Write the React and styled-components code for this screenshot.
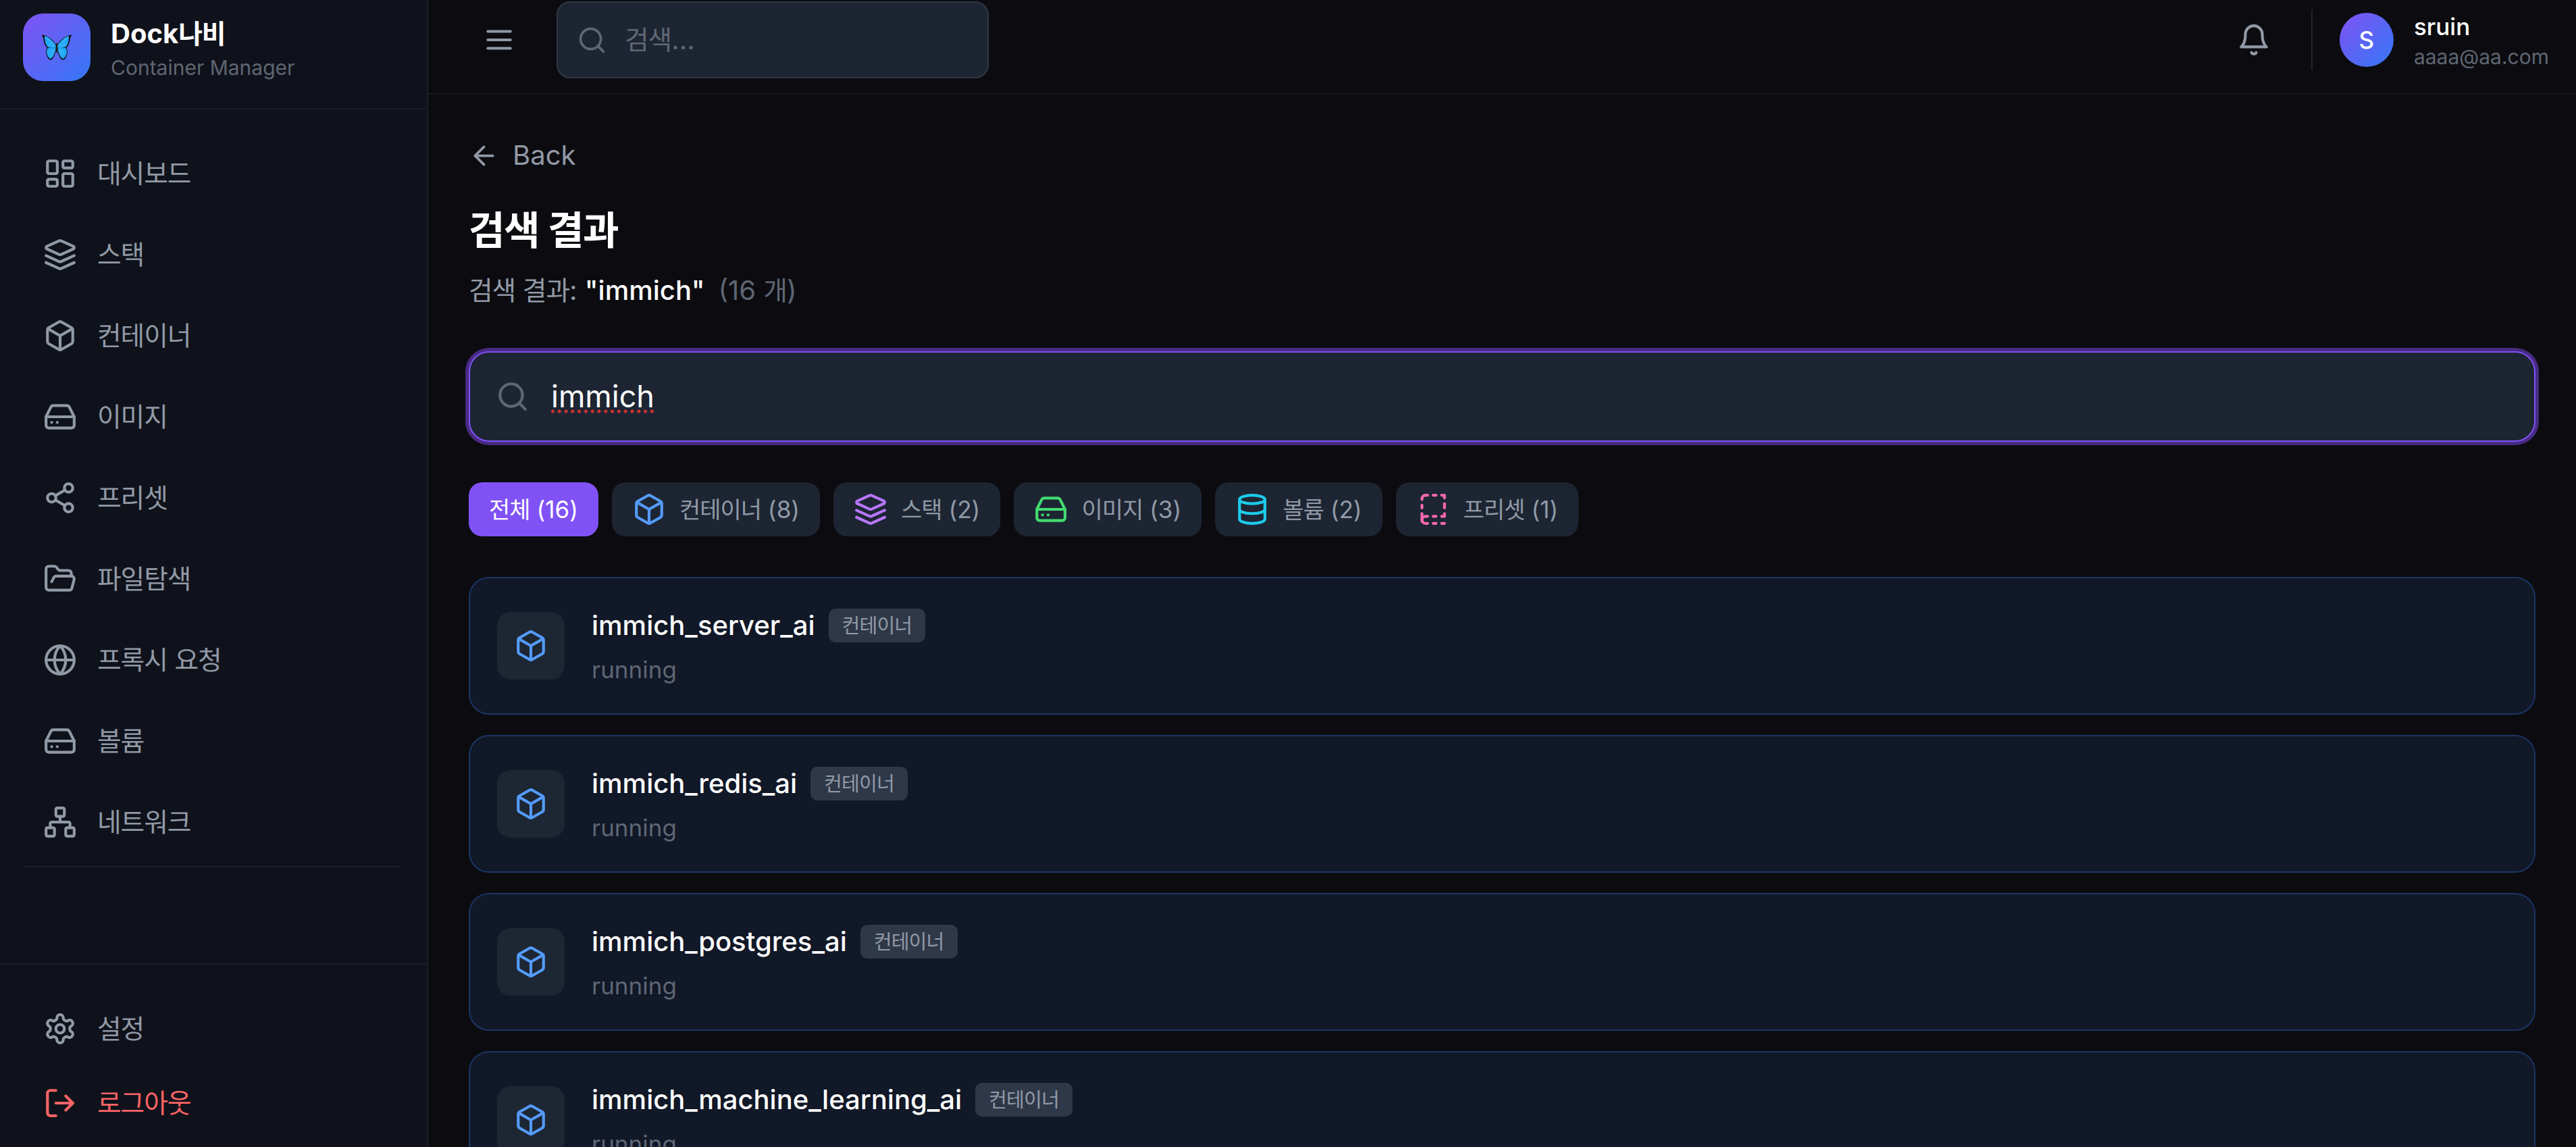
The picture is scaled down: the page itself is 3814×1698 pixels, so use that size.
import React from 'react';
import styled, { createGlobalStyle } from 'styled-components';

const ICONS = {
    dashboard: (
        <>
            <rect width="7" height="9" x="3" y="3" rx="1" />
            <rect width="7" height="5" x="14" y="3" rx="1" />
            <rect width="7" height="9" x="14" y="12" rx="1" />
            <rect width="7" height="5" x="3" y="16" rx="1" />
        </>
    ),
    layers: (
        <>
            <path d="m12.83 2.18a2 2 0 0 0-1.66 0L2.6 6.08a1 1 0 0 0 0 1.83l8.58 3.91a2 2 0 0 0 1.66 0l8.58-3.9a1 1 0 0 0 0-1.83Z" />
            <path d="m22 17.65-9.17 4.16a2 2 0 0 1-1.66 0L2 17.65" />
            <path d="m22 12.65-9.17 4.16a2 2 0 0 1-1.66 0L2 12.65" />
        </>
    ),
    box: (
        <>
            <path d="M21 8a2 2 0 0 0-1-1.73l-7-4a2 2 0 0 0-2 0l-7 4A2 2 0 0 0 3 8v8a2 2 0 0 0 1 1.73l7 4a2 2 0 0 0 2 0l7-4A2 2 0 0 0 21 16Z" />
            <path d="m3.3 7 8.7 5 8.7-5" />
            <path d="M12 22V12" />
        </>
    ),
    drive: (
        <>
            <path d="M22 12H2" />
            <path d="M5.45 5.11 2 12v6a2 2 0 0 0 2 2h16a2 2 0 0 0 2-2v-6l-3.45-6.89A2 2 0 0 0 16.76 4H7.24a2 2 0 0 0-1.79 1.11z" />
            <path d="M6 16h.01" />
            <path d="M10 16h.01" />
        </>
    ),
    share: (
        <>
            <circle cx="18" cy="5" r="3" />
            <circle cx="6" cy="12" r="3" />
            <circle cx="18" cy="19" r="3" />
            <path d="M8.59 13.51 15.42 17.49" />
            <path d="M15.41 6.51 8.59 10.49" />
        </>
    ),
    folder: (
        <path d="m6 14 1.5-2.9A2 2 0 0 1 9.24 10H20a2 2 0 0 1 1.94 2.5l-1.54 6a2 2 0 0 1-1.95 1.5H4a2 2 0 0 1-2-2V5a2 2 0 0 1 2-2h3.9a2 2 0 0 1 1.69.9l.81 1.2a2 2 0 0 0 1.67.9H18a2 2 0 0 1 2 2v2" />
    ),
    globe: (
        <>
            <circle cx="12" cy="12" r="10" />
            <path d="M12 2a14.5 14.5 0 0 0 0 20 14.5 14.5 0 0 0 0-20" />
            <path d="M2 12h20" />
        </>
    ),
    network: (
        <>
            <rect x="16" y="16" width="6" height="6" rx="1" />
            <rect x="2" y="16" width="6" height="6" rx="1" />
            <rect x="9" y="2" width="6" height="6" rx="1" />
            <path d="M5 16v-3a1 1 0 0 1 1-1h12a1 1 0 0 1 1 1v3" />
            <path d="M12 12V8" />
        </>
    ),
    settings: (
        <>
            <path d="M12.22 2h-.44a2 2 0 0 0-2 2v.18a2 2 0 0 1-1 1.73l-.43.25a2 2 0 0 1-2 0l-.15-.08a2 2 0 0 0-2.73.73l-.22.38a2 2 0 0 0 .73 2.73l.15.1a2 2 0 0 1 1 1.72v.51a2 2 0 0 1-1 1.74l-.15.09a2 2 0 0 0-.73 2.73l.22.38a2 2 0 0 0 2.73.73l.15-.08a2 2 0 0 1 2 0l.43.25a2 2 0 0 1 1 1.73V20a2 2 0 0 0 2 2h.44a2 2 0 0 0 2-2v-.18a2 2 0 0 1 1-1.73l.43-.25a2 2 0 0 1 2 0l.15.08a2 2 0 0 0 2.73-.73l.22-.39a2 2 0 0 0-.73-2.73l-.15-.08a2 2 0 0 1-1-1.74v-.5a2 2 0 0 1 1-1.74l.15-.09a2 2 0 0 0 .73-2.73l-.22-.38a2 2 0 0 0-2.73-.73l-.15.08a2 2 0 0 1-2 0l-.43-.25a2 2 0 0 1-1-1.73V4a2 2 0 0 0-2-2z" />
            <circle cx="12" cy="12" r="3" />
        </>
    ),
    logout: (
        <>
            <path d="M9 21H5a2 2 0 0 1-2-2V5a2 2 0 0 1 2-2h4" />
            <path d="m16 17 5-5-5-5" />
            <path d="M21 12H9" />
        </>
    ),
    menu: (
        <>
            <path d="M4 6h16" />
            <path d="M4 12h16" />
            <path d="M4 18h16" />
        </>
    ),
    search: (
        <>
            <circle cx="11" cy="11" r="8" />
            <path d="m21 21-4.3-4.3" />
        </>
    ),
    bell: (
        <>
            <path d="M6 8a6 6 0 0 1 12 0c0 7 3 9 3 9H3s3-2 3-9" />
            <path d="M10.3 21a1.94 1.94 0 0 0 3.4 0" />
        </>
    ),
    back: (
        <>
            <path d="m12 19-7-7 7-7" />
            <path d="M19 12H5" />
        </>
    ),
    database: (
        <>
            <ellipse cx="12" cy="5" rx="9" ry="3" />
            <path d="M3 5V19A9 3 0 0 0 21 19V5" />
            <path d="M3 12A9 3 0 0 0 21 12" />
        </>
    ),
    preset: (
        <>
            <path d="M20 22h-2" />
            <path d="M20 15v2h-2" />
            <path d="M4 19.5V15" />
            <path d="M20 8v3" />
            <path d="M18 2h2v2" />
            <path d="M4 11V9" />
            <path d="M12 2h2" />
            <path d="M12 22h2" />
            <path d="M12 17h2" />
            <path d="M8 22H6.5a2.5 2.5 0 0 1 0-5H8" />
            <path d="M4 5v-.5A2.5 2.5 0 0 1 6.5 2H8" />
        </>
    ),
};

const NAV = [
    { icon: 'dashboard', label: '대시보드' },
    { icon: 'layers', label: '스택' },
    { icon: 'box', label: '컨테이너' },
    { icon: 'drive', label: '이미지' },
    { icon: 'share', label: '프리셋' },
    { icon: 'folder', label: '파일탐색' },
    { icon: 'globe', label: '프록시 요청' },
    { icon: 'drive', label: '볼륨' },
    { icon: 'network', label: '네트워크' },
];

const FILTERS = [
    { label: '전체', count: 16, active: true },
    { icon: 'box', color: '#549bfa', label: '컨테이너', count: 8 },
    { icon: 'layers', color: '#b677f9', label: '스택', count: 2 },
    { icon: 'drive', color: '#42dc70', label: '이미지', count: 3 },
    { icon: 'database', color: '#1ccbea', label: '볼륨', count: 2 },
    { icon: 'preset', color: '#f768ae', label: '프리셋', count: 1 },
];

const RESULTS = ['immich_server_ai', 'immich_redis_ai', 'immich_postgres_ai', 'immich_machine_learning_ai'];

const Icon = ({ name, size = 50, color }) => (
    <Svg $size={size} $color={color} viewBox="0 0 24 24">{ICONS[name]}</Svg>
);

const Butterfly = () => (
    <ButterflySvg viewBox="0 0 44 38">
        <g fill="none" stroke="#5a6bd8" strokeWidth="0.8">
            <path d="M21.5 13C21 9 19.5 6 17.5 4" />
            <path d="M22.5 13C23 9 24.5 6 26.5 4" />
        </g>
        <g fill="#15141c">
            <path d="M21 15C17 8 8 1 1 .5C-.5 1 .3 3 2 5C3 12 4 17 8 19.5C5.500 23 5.500 28 8 33C9 37 13 38.500 15 37C18 34 20 28 21.200 23Z" />
            <path d="M23 15C27 8 36 1 43 .5C44.500 1 43.700 3 42 5C41 12 40 17 36 19.500C38.500 23 38.500 28 36 33C35 37 31 38.500 29 37C26 34 24 28 22.800 23Z" />
        </g>
        <g fill="#22a9f7" stroke="#22a9f7" strokeWidth="1" strokeLinejoin="round">
            <path d="M20.5 16.500C16.500 10 10 4 4.500 2.500C4.500 9 6 16 9.500 18.500C13 19.500 17 19.500 20.500 19.200Z" />
            <path d="M23.500 16.500C27.500 10 34 4 39.500 2.500C39.500 9 38 16 34.500 18.500C31 19.500 27 19.500 23.500 19.200Z" />
            <path d="M20.200 20.500C16 20 11 20 8.800 20.800C6.800 24 7.500 29 9.500 32.500C11 35.500 13.500 36 15 34C17.500 30.500 19.500 25 20.200 20.500Z" />
            <path d="M23.800 20.500C28 20 33 20 35.200 20.800C37.200 24 36.500 29 34.500 32.500C33 35.500 30.500 36 29 34C26.500 30.500 24.500 25 23.800 20.500Z" />
        </g>
        <g fill="none" stroke="#4fc2fb" strokeWidth="0.9">
            <path d="M19 16.500 7 5M19 18 9 14M18 22 10 29M19 23 14 33" />
            <path d="M25 16.500 37 5M25 18 35 14M26 22 34 29M25 23 30 33" />
        </g>
        <path fill="#231f26" d="M22 12.500C23.200 12.500 23.500 15 23.300 19C23.200 23 22.800 27 22 28.500C21.200 27 20.800 23 20.700 19C20.500 15 20.800 12.500 22 12.500Z" />
    </ButterflySvg>
);

const App = () => {
    return (
        <>
            <GlobalStyle />
            <Shell>
                <Sidebar>
                    <Brand>
                        <Logo><Butterfly /></Logo>
                        <div>
                            <BrandName>Dock<Ko>나비</Ko></BrandName>
                            <BrandSub>Container Manager</BrandSub>
                        </div>
                    </Brand>
                    <Nav>
                        {NAV.map((item) => (
                            <NavItem key={item.label}>
                                <Icon name={item.icon} />
                                <span><Ko>{item.label}</Ko></span>
                            </NavItem>
                        ))}
                        <Divider />
                    </Nav>
                    <SidebarFooter>
                        <NavItem><Icon name="settings" /><span><Ko>설정</Ko></span></NavItem>
                        <NavItem $danger><Icon name="logout" /><span><Ko>로그아웃</Ko></span></NavItem>
                    </SidebarFooter>
                </Sidebar>
                <Main>
                    <Header>
                        <IconButton><Icon name="menu" /></IconButton>
                        <HeaderSearch>
                            <Icon name="search" size={45} />
                            <span><Ko>검색</Ko>...</span>
                        </HeaderSearch>
                        <HeaderRight>
                            <IconButton><Icon name="bell" /></IconButton>
                            <User>
                                <Avatar>S</Avatar>
                                <div>
                                    <UserName>sruin</UserName>
                                    <UserMail>aaaa@aa.com</UserMail>
                                </div>
                            </User>
                        </HeaderRight>
                    </Header>
                    <Content>
                        <Back><Icon name="back" size={45} />Back</Back>
                        <Title><Ko>검색 결과</Ko></Title>
                        <Summary>
                            <Ko>검색 결과</Ko>: <strong>"immich"</strong>
                            <em>(16 <Ko>개</Ko>)</em>
                        </Summary>
                        <SearchBox>
                            <Icon name="search" />
                            <Query>immich</Query>
                        </SearchBox>
                        <Filters>
                            {FILTERS.map((f) => (
                                <Pill key={f.label} $active={f.active}>
                                    {f.icon && <Icon name={f.icon} color={f.color} />}
                                    <span><Ko>{f.label}</Ko> ({f.count})</span>
                                </Pill>
                            ))}
                        </Filters>
                        <Results>
                            {RESULTS.map((name) => (
                                <Card key={name}>
                                    <CardIcon><Icon name="box" /></CardIcon>
                                    <div>
                                        <CardTitle>
                                            {name}
                                            <Badge><Ko>컨테이너</Ko></Badge>
                                        </CardTitle>
                                        <Status>running</Status>
                                    </div>
                                </Card>
                            ))}
                        </Results>
                    </Content>
                </Main>
            </Shell>
        </>
    );
};

export default App;

const GlobalStyle = createGlobalStyle`
    *{
        box-sizing:border-box;
    }
    body{
        margin:0;
        background:#0c0c10;
        color:#ffffff;
        font-family:Inter, "Noto Sans CJK KR", sans-serif;
        font-size:40px;
        line-height:60px;
        overflow:hidden;
    }
`

const Svg = styled.svg`
    display:block;
    flex:none;
    width:${(p) => p.$size}px;
    height:${(p) => p.$size}px;
    fill:none;
    stroke:${(p) => p.$color || 'currentColor'};
    stroke-width:2;
    stroke-linecap:round;
    stroke-linejoin:round;
`

const ButterflySvg = styled.svg`
    display:block;
    width:44px;
    height:38px;
    overflow:visible;
`

// Hangul is set a little smaller and tighter than the Latin text around it
const Ko = styled.span`
    font-size:0.97em;
    line-height:1;
    letter-spacing:-0.028em;
    word-spacing:0.02em;
`

const Shell = styled.div`
    display:flex;
    height:1698px;
    overflow:hidden;
`

const Sidebar = styled.aside`
    display:flex;
    flex-direction:column;
    flex:none;
    width:634px;
    background:#0f121a;
    border-right:2px solid #1b1e25;
`

const Brand = styled.div`
    display:flex;
    gap:30px;
    height:162px;
    padding:20px 0 0 34px;
    border-bottom:2px solid #1b1e25;
`

const Logo = styled.div`
    display:flex;
    align-items:center;
    justify-content:center;
    width:100px;
    height:100px;
    border-radius:30px;
    background:linear-gradient(135deg, #8052f5, #3478f6);
`

const BrandName = styled.div`
    font-weight:700;
`

const BrandSub = styled.div`
    font-size:30px;
    line-height:40px;
    color:#5f6673;
`

const Nav = styled.nav`
    display:flex;
    flex-direction:column;
    flex:1;
    gap:10px;
    padding:40px 40px 0 34px;
`

const NavItem = styled.a`
    display:flex;
    align-items:center;
    gap:30px;
    height:110px;
    padding:0 30px;
    color:${(p) => (p.$danger ? '#fb6465' : '#9199a6')};
`

const Divider = styled.div`
    height:2px;
    background:#1b1e25;
`

const SidebarFooter = styled.div`
    height:272px;
    padding:40px 40px 0 34px;
    border-top:2px solid #1b1e25;
`

const Main = styled.main`
    flex:1;
    min-width:0;
`

const Header = styled.header`
    display:flex;
    align-items:center;
    gap:40px;
    height:140px;
    padding:0 40px 20px 60px;
    border-bottom:2px solid #18181c;
`

const IconButton = styled.button`
    display:flex;
    padding:20px;
    border:0;
    background:none;
    color:#9199a6;
`

const HeaderSearch = styled.div`
    display:flex;
    align-items:center;
    gap:26px;
    width:640px;
    height:114px;
    padding:0 28px;
    border:2px solid #2e3848;
    border-radius:20px;
    background:#1d2533;
    color:#5f6773;
`

const HeaderRight = styled.div`
    display:flex;
    align-items:center;
    gap:40px;
    margin-left:auto;
`

const User = styled.div`
    display:flex;
    align-items:center;
    gap:30px;
    padding-left:40px;
    border-left:2px solid #25252a;
`

const Avatar = styled.div`
    display:flex;
    align-items:center;
    justify-content:center;
    width:80px;
    height:80px;
    border-radius:50%;
    background:linear-gradient(135deg, #8052f5, #3478f6);
    font-size:35px;
    font-weight:500;
`

const UserName = styled.div`
    font-size:35px;
    line-height:50px;
    font-weight:500;
`

const UserMail = styled.div`
    font-size:30px;
    line-height:40px;
    color:#5f6673;
`

const Content = styled.div`
    display:flex;
    flex-direction:column;
    padding:60px;
`

const Back = styled.div`
    display:flex;
    align-items:center;
    gap:20px;
    color:#9199a6;
`

const Title = styled.h1`
    margin:40px 0 0;
    font-size:60px;
    line-height:80px;
    font-weight:700;
`

const Summary = styled.p`
    margin:20px 0 60px;
    color:#9199a6;
    strong{
        font-weight:500;
        color:#ffffff;
    }
    em{
        margin-left:20px;
        font-style:normal;
        color:#5f6673;
    }
`

const SearchBox = styled.div`
    display:flex;
    align-items:center;
    gap:32px;
    height:134px;
    padding:0 38px;
    border:2px solid #8052f5;
    border-radius:30px;
    background:#1d2533;
    box-shadow:0 0 0 5px #482b83;
    color:#5f6773;
`

const Query = styled.span`
    font-size:45px;
    line-height:70px;
    color:#ffffff;
    background:radial-gradient(circle, #cf3231 2.2px, transparent 2.9px) -2.5px 53.5px / 9.8px 6px repeat-x;
`

const Filters = styled.div`
    display:flex;
    gap:20px;
    margin:60px 0;
`

const Pill = styled.button`
    display:flex;
    align-items:center;
    gap:20px;
    height:80px;
    padding:0 30px;
    border:0;
    border-radius:20px;
    background:${(p) => (p.$active ? '#8052f5' : '#1d2533')};
    color:${(p) => (p.$active ? '#ffffff' : '#9199a6')};
    font-family:inherit;
    font-size:35px;
    line-height:50px;
    white-space:nowrap;
`

const Results = styled.div`
    display:flex;
    flex-direction:column;
    gap:30px;
`

const Card = styled.div`
    display:flex;
    align-items:center;
    gap:40px;
    height:204px;
    padding:0 40px;
    border:2px solid #1b3565;
    border-radius:30px;
    background:#111827;
`

const CardIcon = styled.div`
    display:flex;
    align-items:center;
    justify-content:center;
    width:100px;
    height:100px;
    border-radius:20px;
    background:#1d2633;
    color:#549bfa;
`

const CardTitle = styled.div`
    display:flex;
    align-items:center;
    gap:20px;
    font-weight:500;
`

const Badge = styled.span`
    padding:5px 20px;
    border-radius:10px;
    background:#2e3848;
    color:#9199a6;
    font-size:30px;
    line-height:40px;
    font-weight:400;
`

const Status = styled.div`
    margin-top:10px;
    font-size:35px;
    line-height:50px;
    color:#5f6673;
`
